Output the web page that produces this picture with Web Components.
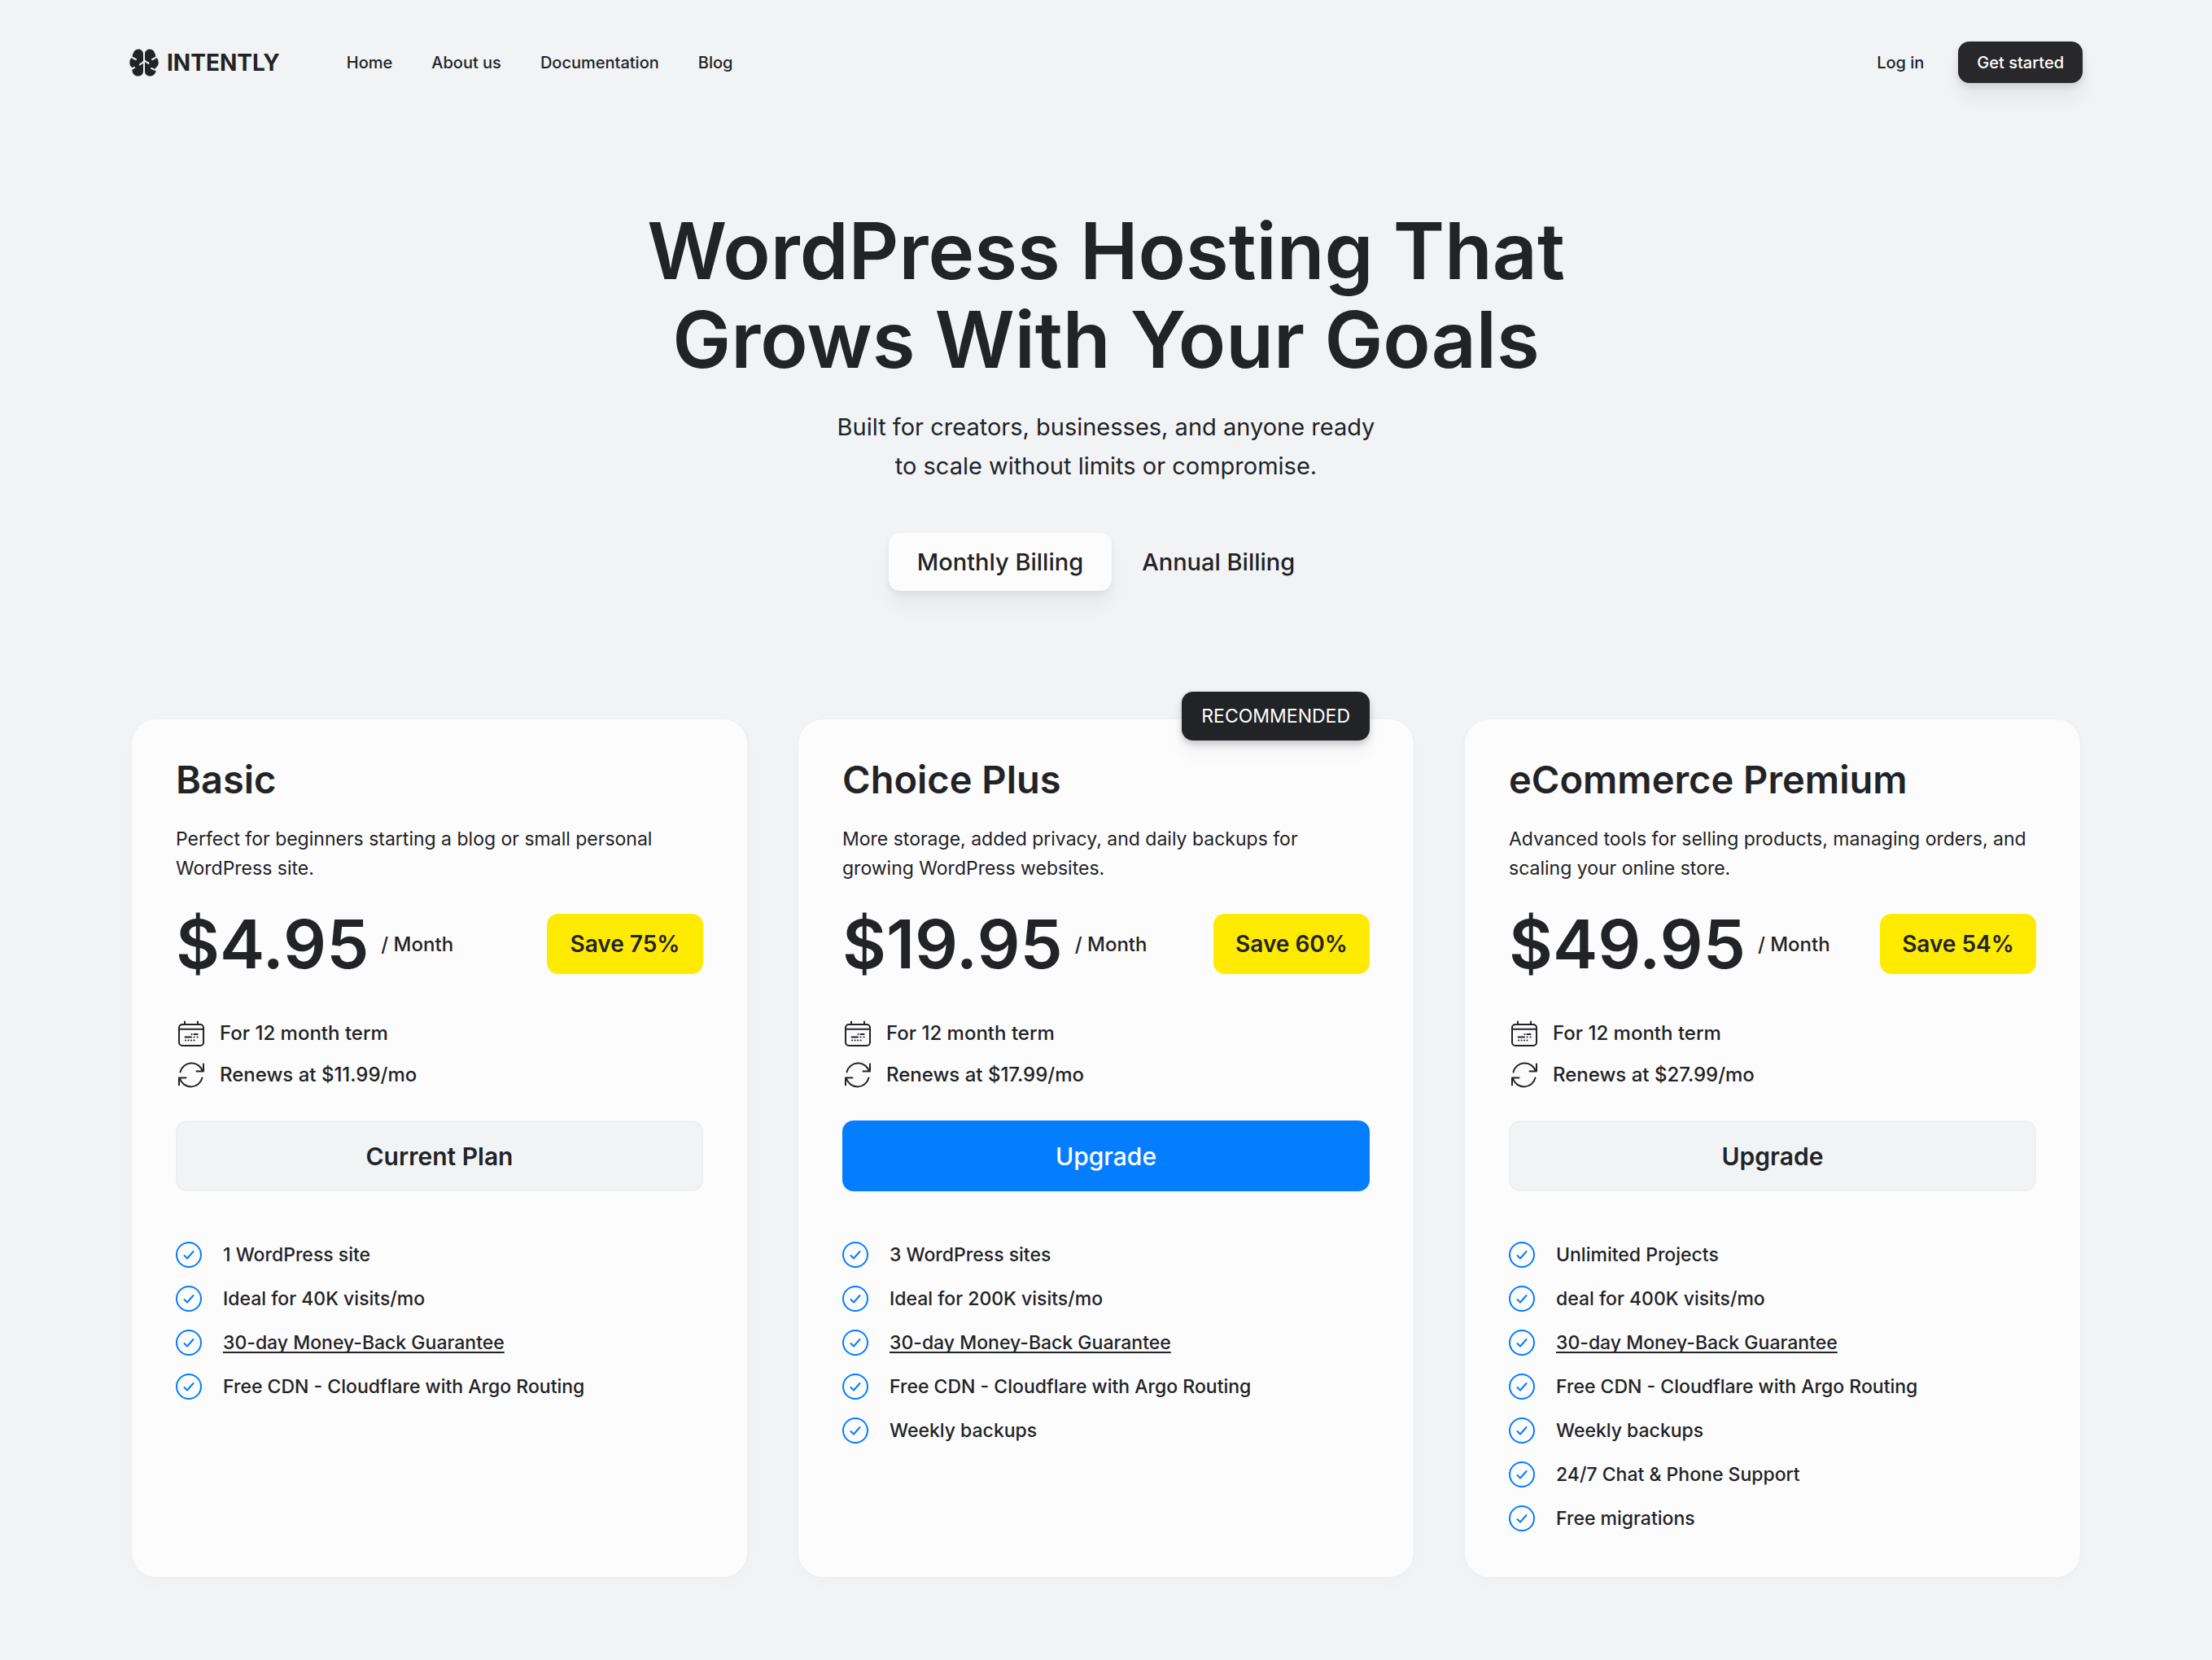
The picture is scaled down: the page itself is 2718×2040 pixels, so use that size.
<!DOCTYPE html>
<html lang="en">
<head>
<meta charset="utf-8">
<meta name="viewport" content="width=device-width, initial-scale=1">
<title>Intently – WordPress Hosting</title>
<style>
  :root {
    --ink: #222326;
    --page: #f1f3f5;
    --card: #fcfcfc;
    --blue: #047dff;
    --yellow: #ffeb00;
    --radius: 14px;
  }
  body {
    margin: 0;
    min-height: 100vh;
    background: var(--page);
    color: var(--ink);
    font-family: Inter, "Liberation Sans", sans-serif;
  }
  main { padding: 152px 162px 102px; }
</style>
</head>
<body>
<site-header>
  <nav-link href="#home">Home</nav-link>
  <nav-link href="#about">About us</nav-link>
  <nav-link href="#docs">Documentation</nav-link>
  <nav-link href="#blog">Blog</nav-link>
</site-header>
<main>
  <page-hero>
    <span slot="title">WordPress Hosting That<br>Grows With Your Goals</span>
    <span slot="lead">Built for creators, businesses, and anyone ready<br>to scale without limits or compromise.</span>
    <billing-toggle></billing-toggle>
  </page-hero>
  <plan-grid>
    <plan-card price="$4.95" save="Save 75%" renews="Renews at $11.99/mo" action="Current Plan">
      <span slot="name">Basic</span>
      <span slot="about">Perfect for beginners starting a blog or small personal WordPress site.</span>
      <plan-feature>1 WordPress site</plan-feature>
      <plan-feature>Ideal for 40K visits/mo</plan-feature>
      <plan-feature href="#guarantee">30-day Money-Back Guarantee</plan-feature>
      <plan-feature>Free CDN - Cloudflare with Argo Routing</plan-feature>
    </plan-card>
    <plan-card price="$19.95" save="Save 60%" renews="Renews at $17.99/mo" action="Upgrade" tag="RECOMMENDED">
      <span slot="name">Choice Plus</span>
      <span slot="about">More storage, added privacy, and daily backups for growing WordPress websites.</span>
      <plan-feature>3 WordPress sites</plan-feature>
      <plan-feature>Ideal for 200K visits/mo</plan-feature>
      <plan-feature href="#guarantee">30-day Money-Back Guarantee</plan-feature>
      <plan-feature>Free CDN - Cloudflare with Argo Routing</plan-feature>
      <plan-feature>Weekly backups</plan-feature>
    </plan-card>
    <plan-card price="$49.95" save="Save 54%" renews="Renews at $27.99/mo" action="Upgrade">
      <span slot="name">eCommerce Premium</span>
      <span slot="about">Advanced tools for selling products, managing orders, and scaling your online store.</span>
      <plan-feature>Unlimited Projects</plan-feature>
      <plan-feature>deal for 400K visits/mo</plan-feature>
      <plan-feature href="#guarantee">30-day Money-Back Guarantee</plan-feature>
      <plan-feature>Free CDN - Cloudflare with Argo Routing</plan-feature>
      <plan-feature>Weekly backups</plan-feature>
      <plan-feature>24/7 Chat &amp; Phone Support</plan-feature>
      <plan-feature>Free migrations</plan-feature>
    </plan-card>
  </plan-grid>
</main>

<script>
const define = (name, render) => {
  customElements.define(name, class extends HTMLElement {
    constructor() {
      super();
      this.attachShadow({ mode: 'open' });
    }
    connectedCallback() {
      this.shadowRoot.innerHTML = render(this);
    }
  });
};

define('brand-mark', () => `
  <style>
    :host { display: block; }
    a { display: flex; align-items: center; gap: 10px; color: inherit; text-decoration: none; font-size: 28px; font-weight: 700; line-height: 36px; }
    svg { display: block; width: 36px; height: 34px; }
  </style>
  <a href="#home">
    <svg viewBox="0 0 36 34" aria-hidden="true">
      <g fill="currentColor">
        <path d="M11 0.5C14.500 0.500 17 3 17 6.500V27.500C17 31 14.500 33.500 11 33.500C7 33.500 4.200 31 3.500 27.400C3.300 26 3.700 24.600 4.300 23.600C1.800 22.400 0.300 20 0.300 17C0.300 14 1.300 11.500 3.500 10.200C4.200 4.500 6.500 0.500 11 0.500Z"/>
        <path d="M25 0.500C21.500 0.500 19 3 19 6.500V27.500C19 31 21.500 33.500 25 33.500C29 33.500 31.800 31 32.500 27.400C32.700 26 32.300 24.600 31.700 23.600C34.200 22.400 35.700 20 35.700 17C35.700 14 34.700 11.500 32.500 10.200C31.800 4.500 29.500 0.500 25 0.500Z"/>
      </g>
      <g fill="none" stroke="#f1f3f5" stroke-width="2" stroke-linecap="round">
        <path d="M3 10.500C5 10.800 5.500 12.600 8 13"/>
        <path d="M17 16C16 18.500 13.500 17.500 13 19.500M1.500 24C3.500 24.800 5 24 6 22.800"/>
        <path d="M33 10.500C31 10.800 30.500 12.600 28 13"/>
        <path d="M19 14.500C20 17 22.500 16 23.500 18M27 24C29 24 30 26.500 33 25.500"/>
      </g>
    </svg>
    <span>INTENTLY</span>
  </a>`);

define('nav-link', el => `
  <style>
    :host { display: block; }
    a { color: inherit; text-decoration: none; font-size: 20px; font-weight: 500; line-height: 28px; }
  </style>
  <a href="${el.getAttribute('href')}"><slot></slot></a>`);

define('site-header', () => `
  <style>
    :host { display: block; }
    header { display: flex; align-items: center; padding: 51px 159px 0; }
    nav { display: flex; gap: 48px; margin-left: 82px; }
    .account { display: flex; align-items: center; gap: 42px; margin-left: auto; }
    button {
      height: 51px; padding: 0 23px; border: 0; border-radius: var(--radius);
      background: #28282a; color: #fff; font: inherit; font-size: 20px; font-weight: 500;
      box-shadow: 0 4px 8px rgb(0 0 0 / .12), 0 20px 24px rgb(0 0 0 / .05);
    }
  </style>
  <header>
    <brand-mark></brand-mark>
    <nav aria-label="Main"><slot></slot></nav>
    <div class="account">
      <nav-link href="#login">Log in</nav-link>
      <button type="button">Get started</button>
    </div>
  </header>`);

define('page-hero', () => `
  <style>
    :host { display: flex; flex-direction: column; align-items: center; text-align: center; }
    h1 { margin: 0 0 29px; font-size: 96px; font-weight: 600; line-height: 109px; }
    p { margin: 0 0 58px; font-size: 29px; line-height: 48px; }
  </style>
  <h1><slot name="title"></slot></h1>
  <p><slot name="lead"></slot></p>
  <slot></slot>`);

define('billing-toggle', () => `
  <style>
    :host { display: flex; gap: 2px; }
    button {
      height: 71px; padding: 0 35px; border: 0; border-radius: var(--radius);
      background: none; color: inherit; font: inherit; font-size: 29px; font-weight: 500;
    }
    button[aria-pressed="true"] {
      background: var(--card);
      box-shadow: 0 4px 8px rgb(20 30 20 / .06), 0 20px 24px rgb(0 0 0 / .04);
    }
  </style>
  <button type="button" aria-pressed="true">Monthly Billing</button>
  <button type="button" aria-pressed="false">Annual Billing</button>`);

define('plan-grid', () => `
  <style>
    :host { display: grid; grid-template-columns: repeat(3, minmax(0, 1fr)); gap: 63px; margin-top: 158px; }
  </style>
  <slot></slot>`);

define('plan-feature', el => {
  const href = el.getAttribute('href');
  return `
  <style>
    :host { display: flex; align-items: center; gap: 26px; font-size: 23px; font-weight: 500; line-height: 32px; }
    svg { flex: none; display: block; width: 32px; height: 32px; color: var(--blue); }
    a { color: inherit; text-decoration: underline; text-decoration-thickness: 2px; text-underline-offset: 3px; text-decoration-skip-ink: none; }
  </style>
  <svg viewBox="0 0 32 32" fill="none" stroke="currentColor" stroke-width="2" stroke-linecap="round" stroke-linejoin="round" aria-hidden="true">
    <circle cx="16" cy="16" r="15"/>
    <path d="M10.500 17L14 20.500L21.500 12"/>
  </svg>
  ${href ? `<a href="${href}"><slot></slot></a>` : '<span><slot></slot></span>'}`;
});

define('plan-card', el => {
  const get = name => el.getAttribute(name);
  const tag = get('tag');
  return `
  <style>
    :host { display: block; }
    article {
      position: relative; box-sizing: border-box; height: 100%;
      display: flex; flex-direction: column; padding: 44px 54px 56px;
      border-radius: 30px; background: var(--card);
      box-shadow: 0 0 4px rgb(0 0 0 / .03), 0 8px 24px rgb(0 0 0 / .015);
    }
    .tag {
      position: absolute; top: -34px; right: 54px; padding: 0 24px;
      border-radius: var(--radius); background: var(--ink); color: #fff;
      font-size: 23px; line-height: 60px;
      box-shadow: 0 4px 8px rgb(0 0 0 / .2), 0 16px 20px rgb(0 0 0 / .04);
    }
    h2 { margin: 0; font-size: 47px; font-weight: 600; line-height: 60px; }
    p { margin: 25px 0 38px; font-size: 23px; line-height: 36px; }
    .price { display: flex; align-items: center; height: 74px; }
    strong { font-size: 83px; font-weight: 600; line-height: 74px; }
    .per { margin-left: 15px; font-size: 24px; font-weight: 500; }
    .save {
      box-sizing: border-box; min-width: 192px; margin-left: auto; padding: 0 24px;
      border-radius: var(--radius); background: var(--yellow);
      font-size: 28px; font-weight: 600; line-height: 74px; text-align: center;
    }
    ul { display: flex; flex-direction: column; gap: 19px; margin: 57px 0 40px; padding: 0; list-style: none; }
    li { display: flex; align-items: center; gap: 19px; padding-left: 3px; font-size: 24px; font-weight: 500; line-height: 32px; }
    li svg { display: block; width: 32px; height: 32px; }
    button {
      flex: none; height: 87px; border: 2px solid #eeefef; border-radius: var(--radius);
      background: #f1f3f5; color: inherit; font: inherit; font-size: 30px; font-weight: 600;
    }
    button.primary { border-color: var(--blue); background: var(--blue); color: #fff; font-weight: 500; }
    .features { display: flex; flex-direction: column; gap: 22px; margin-top: 62px; }
  </style>
  <article>
    ${tag ? `<span class="tag">${tag}</span>` : ''}
    <h2><slot name="name"></slot></h2>
    <p><slot name="about"></slot></p>
    <div class="price">
      <strong>${get('price')}</strong>
      <span class="per">/ Month</span>
      <span class="save">${get('save')}</span>
    </div>
    <ul>
      <li>
        <svg viewBox="0 0 32 32" fill="none" stroke="currentColor" stroke-width="2" stroke-linecap="round" aria-hidden="true">
          <rect x="1" y="5" width="30" height="26" rx="4"/>
          <path d="M8 1.500V5M24 1.500V5M1 10.700H31"/>
          <path d="M16.500 17H16.600M19.500 17H23.500M8.500 20.500H16M19.500 20.500H19.600M23.500 20.500H23.600M9 24.500H9.100M12.500 24.500H12.600M16 24.500H16.100M19.500 24.500H19.600"/>
        </svg>
        For 12 month term
      </li>
      <li>
        <svg viewBox="0 0 32 32" fill="none" stroke="currentColor" stroke-width="2" stroke-linecap="round" stroke-linejoin="round" aria-hidden="true">
          <path d="M2.500 12.500A14.300 14.300 0 0 1 30 11.500M31 2.500V11.500H22.500"/>
          <path d="M29.500 19.500A14.300 14.300 0 0 1 2 20.500M1 28.500V19.500H9.500"/>
        </svg>
        ${get('renews')}
      </li>
    </ul>
    <button type="button"${tag ? ' class="primary"' : ''}>${get('action')}</button>
    <div class="features"><slot></slot></div>
  </article>`;
});
</script>
</body>
</html>
